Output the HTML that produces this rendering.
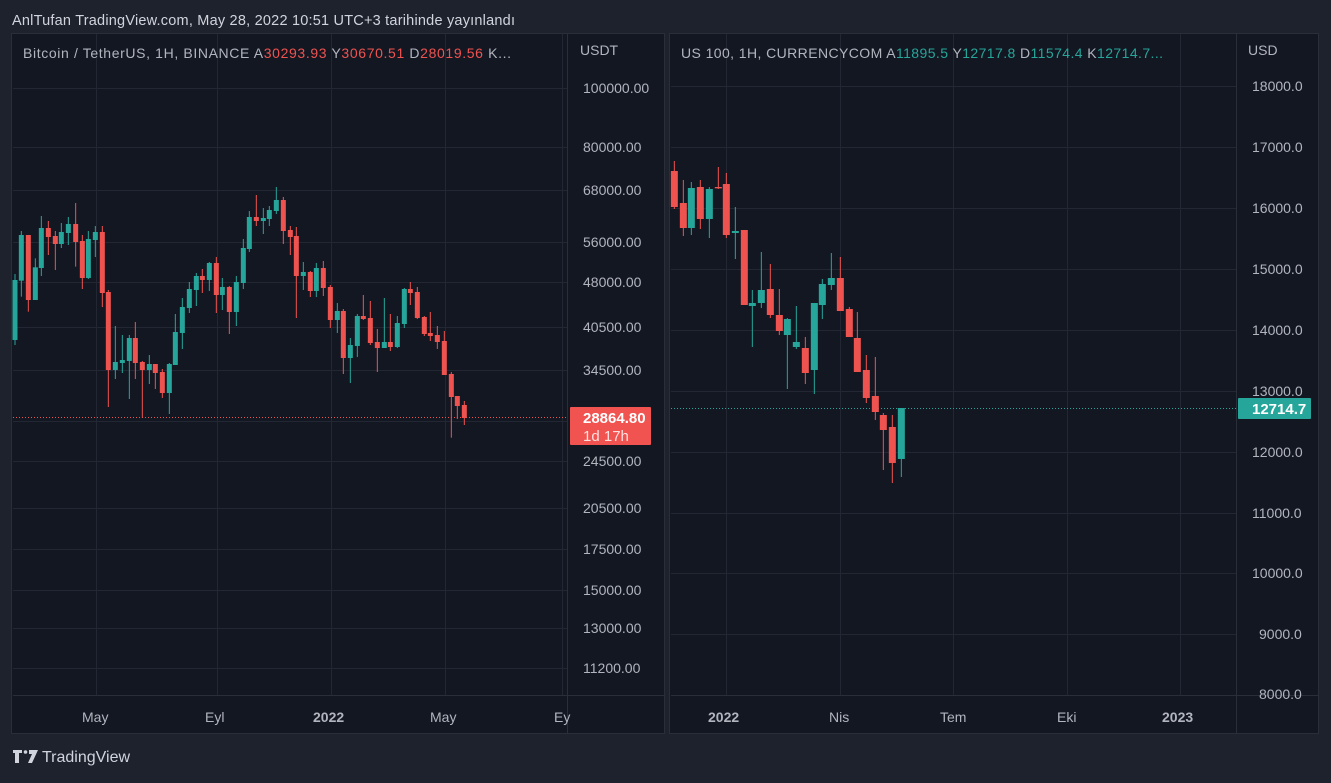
<!DOCTYPE html>
<html><head><meta charset="utf-8"><style>
body{margin:0;background:#1e222d;width:1331px;height:778px;overflow:hidden;font-family:"Liberation Sans",sans-serif}
svg text{font-family:"Liberation Sans",sans-serif}
</style></head><body>
<svg width="1331" height="778" viewBox="0 0 1331 778" xmlns="http://www.w3.org/2000/svg">
<rect width="1331" height="778" fill="#1e222d"/>
<text x="12" y="25" fill="#d1d4dc" font-size="14.5" textLength="503" lengthAdjust="spacing">AnlTufan TradingView.com, May 28, 2022 10:51 UTC+3 tarihinde yayınlandı</text>

<!-- LEFT PANEL -->
<rect x="11.5" y="33.5" width="653" height="700" fill="#131722" stroke="#2a2e39"/>
<g stroke="#232733" stroke-width="1">
<line x1="13" x2="567" y1="88.5" y2="88.5"/><line x1="13" x2="567" y1="147.5" y2="147.5"/><line x1="13" x2="567" y1="190.5" y2="190.5"/><line x1="13" x2="567" y1="242.5" y2="242.5"/><line x1="13" x2="567" y1="282.5" y2="282.5"/><line x1="13" x2="567" y1="327.5" y2="327.5"/><line x1="13" x2="567" y1="370.5" y2="370.5"/><line x1="13" x2="567" y1="421.5" y2="421.5"/><line x1="13" x2="567" y1="461.5" y2="461.5"/><line x1="13" x2="567" y1="508.5" y2="508.5"/><line x1="13" x2="567" y1="549.5" y2="549.5"/><line x1="13" x2="567" y1="590.5" y2="590.5"/><line x1="13" x2="567" y1="628.5" y2="628.5"/><line x1="13" x2="567" y1="668.5" y2="668.5"/>
<line x1="96.5" x2="96.5" y1="34" y2="695"/><line x1="217.5" x2="217.5" y1="34" y2="695"/><line x1="331.5" x2="331.5" y1="34" y2="695"/><line x1="445.5" x2="445.5" y1="34" y2="695"/><line x1="562.5" x2="562.5" y1="34" y2="695"/>
</g>
<line x1="567.5" x2="567.5" y1="34" y2="733" stroke="#2a2e39"/>
<line x1="13" x2="664" y1="695.5" y2="695.5" stroke="#2a2e39"/>
<line x1="13" x2="567" y1="417.5" y2="417.5" stroke="#ef5350" stroke-dasharray="1 2"/>
<text x="23" y="58" fill="#b2b5be" font-size="14" textLength="488" lengthAdjust="spacing">Bitcoin / TetherUS, 1H, BINANCE  A<tspan fill="#ef5350">30293.93</tspan>  Y<tspan fill="#ef5350">30670.51</tspan>  D<tspan fill="#ef5350">28019.56</tspan>  K...</text>
<g fill="#b2b5be" font-size="14">
<text x="580" y="55">USDT</text>
<text x="583" y="93">100000.00</text><text x="583" y="152">80000.00</text><text x="583" y="195">68000.00</text><text x="583" y="247">56000.00</text><text x="583" y="287">48000.00</text><text x="583" y="332">40500.00</text><text x="583" y="375">34500.00</text><text x="583" y="466">24500.00</text><text x="583" y="513">20500.00</text><text x="583" y="554">17500.00</text><text x="583" y="595">15000.00</text><text x="583" y="633">13000.00</text><text x="583" y="673">11200.00</text>
<text x="82" y="722">May</text><text x="205" y="722">Eyl</text><text x="313" y="722" font-weight="bold">2022</text><text x="430" y="722">May</text><text x="554" y="722">Ey</text>
</g>
<rect x="570" y="407" width="81" height="38" fill="#f05350" rx="1"/>
<text x="583" y="423" fill="#fff" font-size="15" font-weight="bold">28864.80</text>
<text x="583" y="441" fill="#ffe0df" font-size="15">1d 17h</text>

<g transform="translate(0,180) scale(0.33333)" stroke-width="3">
<g id="L"></g>
</g>

<!-- RIGHT PANEL -->
<rect x="669.5" y="33.5" width="649" height="700" fill="#131722" stroke="#2a2e39"/>
<g stroke="#232733">
<line x1="671" x2="1236" y1="86.5" y2="86.5"/><line x1="671" x2="1236" y1="147.5" y2="147.5"/><line x1="671" x2="1236" y1="208.5" y2="208.5"/><line x1="671" x2="1236" y1="269.5" y2="269.5"/><line x1="671" x2="1236" y1="330.5" y2="330.5"/><line x1="671" x2="1236" y1="391.5" y2="391.5"/><line x1="671" x2="1236" y1="452.5" y2="452.5"/><line x1="671" x2="1236" y1="513.5" y2="513.5"/><line x1="671" x2="1236" y1="573.5" y2="573.5"/><line x1="671" x2="1236" y1="634.5" y2="634.5"/>
<line x1="726.5" x2="726.5" y1="34" y2="695"/><line x1="840.5" x2="840.5" y1="34" y2="695"/><line x1="953.5" x2="953.5" y1="34" y2="695"/><line x1="1067.5" x2="1067.5" y1="34" y2="695"/><line x1="1180.5" x2="1180.5" y1="34" y2="695"/>
</g>
<line x1="1236.5" x2="1236.5" y1="34" y2="733" stroke="#2a2e39"/>
<line x1="671" x2="1318" y1="695.5" y2="695.5" stroke="#2a2e39"/>
<line x1="671" x2="1236" y1="408.5" y2="408.5" stroke="#26a69a" stroke-dasharray="1 2"/>
<text x="681" y="58" fill="#b2b5be" font-size="14" textLength="482" lengthAdjust="spacing">US 100, 1H, CURRENCYCOM  A<tspan fill="#26a69a">11895.5</tspan>  Y<tspan fill="#26a69a">12717.8</tspan>  D<tspan fill="#26a69a">11574.4</tspan>  K<tspan fill="#26a69a">12714.7...</tspan></text>
<g fill="#b2b5be" font-size="14">
<text x="1248" y="55">USD</text>
<text x="1252" y="91">18000.0</text><text x="1252" y="152">17000.0</text><text x="1252" y="213">16000.0</text><text x="1252" y="274">15000.0</text><text x="1252" y="335">14000.0</text><text x="1252" y="396">13000.0</text><text x="1252" y="457">12000.0</text><text x="1252" y="518">11000.0</text><text x="1252" y="578">10000.0</text><text x="1259" y="639">9000.0</text><text x="1259" y="699">8000.0</text>
<text x="708" y="722" font-weight="bold">2022</text><text x="829" y="722">Nis</text><text x="940" y="722">Tem</text><text x="1057" y="722">Eki</text><text x="1162" y="722" font-weight="bold">2023</text>
</g>
<rect x="1238" y="398" width="73" height="21" fill="#26a69a" rx="1"/>
<text x="1252" y="414" fill="#fff" font-size="15" font-weight="bold">12714.7</text>

<g transform="translate(660,150) scale(0.33333)" stroke-width="3">
<g id="R"></g>
</g>

<!-- logo -->
<g fill="#d1d4dc">
<path d="M13 750h9v3h-3v10h-4v-10h-2z"/>
<circle cx="25.5" cy="752" r="1.8"/>
<path d="M29 750h9l-6 13h-4l4-9h-3z"/>
</g>
<text x="42" y="762" fill="#d1d4dc" font-size="16">TradingView</text>
</svg>
<script>
function draw(id,data,w){var g=document.getElementById(id),s="";
data.forEach(function(c){var col=c[1]=="g"?"#26a69a":"#ef5350";
s+='<line x1="'+c[0]+'" x2="'+c[0]+'" y1="'+c[4]+'" y2="'+c[5]+'" stroke="'+col+'"/>';
s+='<rect x="'+(c[0]-w/2)+'" y="'+c[2]+'" width="'+w+'" height="'+Math.max(4,c[3]-c[2])+'" fill="'+col+'"/>';});
g.innerHTML=s;}
draw("L",[[45,"g",300,480,282,495],[64,"g",165,302,153,350],[85,"r",165,360,165,395],[106,"g",262,360,235,360],[124,"g",144,264,108,288],[145,"r",144,171,123,225],[166,"r",168,192,153,270],[184,"g",156,192,129,204],[205,"g",132,159,111,195],[227,"r",132,186,69,260],[247,"r",183,294,165,327],[265,"g",177,294,153,297],[286,"g",156,180,138,231],[307,"r",156,339,138,381],[325,"r",336,570,330,681],[346,"g",546,570,438,597],[367,"g",540,549,465,579],[388,"g",474,543,465,657],[406,"r",474,549,426,597],[427,"r",546,570,543,713],[448,"g",552,570,525,612],[466,"r",552,579,552,627],[487,"r",576,639,567,654],[508,"g",552,639,549,702],[526,"g",456,555,402,555],[547,"g",381,459,354,507],[568,"g",327,384,306,399],[589,"g",288,330,279,378],[607,"r",288,300,267,339],[628,"g",249,300,246,333],[649,"r",249,345,231,399],[667,"g",321,345,294,390],[688,"r",321,396,318,462],[709,"g",306,396,288,438],[730,"g",204,309,177,327],[748,"g",111,207,93,216],[769,"r",111,123,45,138],[790,"g",114,123,84,162],[808,"g",90,117,78,138],[829,"g",60,93,21,102],[850,"r",60,153,51,192],[871,"r",150,171,138,225],[889,"r",168,288,141,414],[910,"g",276,288,246,330],[931,"r",276,333,273,351],[949,"g",264,333,249,351],[970,"r",264,324,243,348],[991,"r",321,420,315,444],[1012,"g",393,420,369,459],[1030,"r",393,534,387,582],[1051,"g",495,534,474,609],[1072,"g",408,498,402,531],[1090,"r",408,417,345,420],[1111,"r",414,489,363,495],[1132,"r",486,504,447,576],[1153,"g",486,504,354,504],[1171,"r",486,501,402,513],[1192,"g",429,501,408,504],[1213,"g",327,432,324,444],[1231,"r",327,339,306,375],[1252,"r",336,414,321,417],[1273,"r",411,462,408,468],[1291,"r",459,468,396,483],[1312,"r",465,486,438,507],[1333,"r",483,585,453,585],[1354,"r",582,651,576,773],[1372,"r",648,678,648,717],[1393,"r",675,714,663,735]],15);
draw("R",[[43,"r",63,171,33,177],[70,"r",159,234,90,258],[94,"g",114,234,96,255],[121,"r",111,207,90,237],[148,"g",117,207,111,264],[175,"r",111,114,51,117],[199,"r",102,255,69,264],[226,"g",243,249,171,327],[253,"r",240,465,240,465],[277,"g",459,468,420,591],[304,"g",420,459,306,474],[331,"r",417,495,342,504],[358,"r",495,543,417,555],[382,"g",507,555,504,717],[409,"g",576,591,468,597],[436,"r",594,669,561,702],[463,"g",459,660,459,732],[487,"g",402,465,387,507],[514,"g",384,405,309,420],[541,"r",384,483,321,483],[568,"r",477,561,471,561],[592,"r",564,666,486,666],[619,"r",660,744,615,759],[646,"r",738,786,621,810],[670,"r",795,840,789,960],[697,"r",831,939,795,999],[724,"g",774,927,774,981]],21);
</script>
</body></html>
